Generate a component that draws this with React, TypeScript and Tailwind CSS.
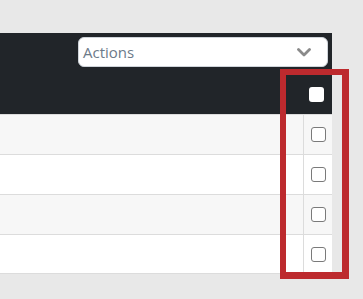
import React from "react";

function Box({ header }: { header?: boolean }) {
  return header ? (
    <div className="h-[15px] w-[15px] rounded-[3px] bg-white" />
  ) : (
    <div className="h-[15px] w-[15px] rounded-[3px] border-[1.5px] border-[#7a7a7a] bg-white" />
  );
}

export default function App() {
  const rows = [0, 1, 2, 3];
  return (
    <div
      className="relative h-[299px] w-[363px] overflow-hidden bg-[#e8e8e8] pt-[33px]"
      style={{ fontFamily: '"Open Sans", "Liberation Sans", sans-serif' }}
    >
      <div className="w-[332px]">
        <div className="bg-[#212529]">
          <div className="flex justify-end pt-[4px] pr-[4px]">
            <div className="flex h-[30px] w-[250px] items-center justify-between rounded-[6px] border border-[#cfd4da] bg-white pl-[4px] pr-[16px]">
              <span className="text-[15px] text-[#6c7a89]">Actions</span>
              <svg width="14" height="9" viewBox="0 0 14 9" fill="none">
                <path d="M1.5 1.5 L7 7 L12.5 1.5" stroke="#8a8a8a" strokeWidth="2.8" strokeLinecap="round" strokeLinejoin="round" />
              </svg>
            </div>
          </div>
          <div className="flex h-[47px] justify-end">
            <div className="flex w-[29px] items-start justify-center pt-[20px] pr-[2px]">
              <Box header />
            </div>
          </div>
        </div>
        {rows.map((i) => (
          <div
            key={i}
            className={`flex h-[40px] border-t border-[#dcdcdc] ${i === 3 ? "border-b" : ""} ${i % 2 === 0 ? "bg-[#f7f7f7]" : "bg-white"}`}
          >
            <div className="flex-1" />
            <div className="flex w-[29px] items-center justify-center border-l border-[#dcdcdc]">
              <Box />
            </div>
          </div>
        ))}
      </div>
      <div className="absolute left-[280px] top-[69px] h-[210px] w-[69px] border-t-[6px] border-l-[6px] border-r-[7px] border-b-[7px] border-[#bd2a2e]" />
    </div>
  );
}
